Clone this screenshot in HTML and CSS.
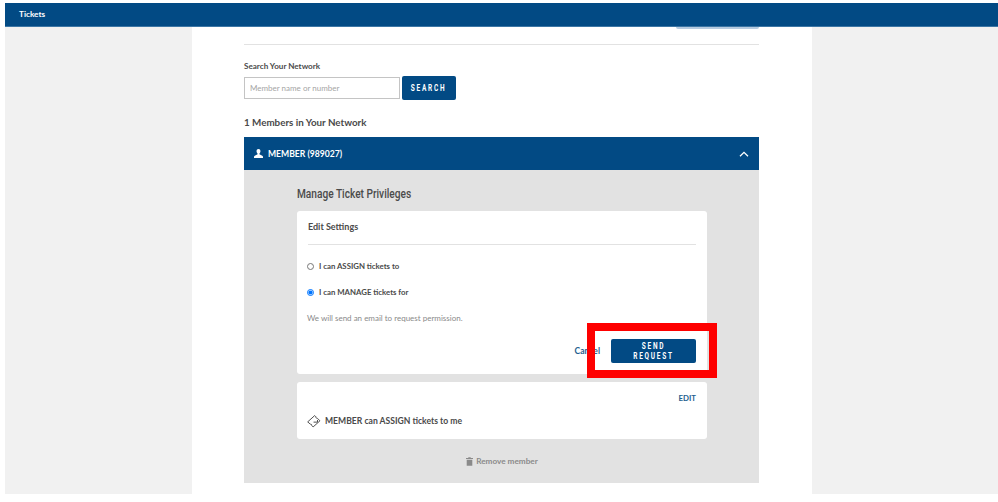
FILE: index.html
```html
<!DOCTYPE html>
<html lang="en">
<head>
  <meta charset="UTF-8">
  <meta name="viewport" content="width=device-width, initial-scale=1.0">
  <title>Tickets</title>
  <link rel="stylesheet" href="styles.css">
</head>
<body>
  <div class="page">
    <header class="topbar">Tickets</header>
    <div class="backdrop">
      <main class="content">
        <div class="top-btn"></div>
        <hr class="top-rule">
        <label class="search-label" for="search">Search Your Network</label>
        <div class="search-row">
          <input type="text" id="search" placeholder="Member name or number">
          <button type="button" class="btn search-btn"><span>SEARCH</span></button>
        </div>
        <h2 class="count">1 Members in Your Network</h2>
        <section class="member">
          <div class="member-head">
            <svg class="icon-user" viewBox="0 0 12 12" width="9" height="9"><path fill="#fff" d="M6 0C4.300 0 3.400 1.200 3.400 3c0 1.300.6 2.500 1.400 3.100v1L1 9c-.7.400-1 .9-1 1.500V12h12v-1.500c0-.6-.3-1.100-1-1.500L7.200 7.100v-1C8 5.500 8.600 4.300 8.600 3 8.600 1.200 7.700 0 6 0z"/></svg>
            <span class="member-name">MEMBER (989027)</span>
            <svg class="icon-chevron" viewBox="0 0 10 6" width="10" height="6"><path fill="none" stroke="#fff" stroke-width="1.300" d="M1 5.300l4-4 4 4"/></svg>
          </div>
          <div class="member-body">
            <h3 class="manage-title">Manage Ticket Privileges</h3>
            <div class="card settings">
              <div class="settings-title">Edit Settings</div>
              <label class="radio-row"><input type="radio" name="priv"> I can ASSIGN tickets to</label>
              <label class="radio-row"><input type="radio" name="priv" checked> I can MANAGE tickets for</label>
              <p class="note">We will send an email to request permission.</p>
              <div class="actions">
                <a href="#" class="cancel">Cancel</a>
                <button type="button" class="btn send-btn"><span>SEND REQUEST</span></button>
              </div>
            </div>
            <div class="card summary">
              <a href="#" class="edit">EDIT</a>
              <div class="summary-line">
                <svg viewBox="0 0 16 16" width="14" height="14"><g fill="none" stroke="#4a4a4a" stroke-width="1.100" stroke-linejoin="round"><path d="M.8 9L8.800 1.800l1.500 1.500c-.3 1 .7 2 1.700 1.700L14.800 7.800 7 14.800l-1.500-1.500c.3-1-.7-2-1.700-1.700z"/><path d="M7.500 9.300h4.500V6.800"/></g></svg>
                <span>MEMBER can ASSIGN tickets to me</span>
              </div>
            </div>
            <a href="#" class="remove">
              <svg viewBox="0 0 10 12" width="7" height="9"><path fill="#8a8a8a" d="M3.500 0h3l.5 1h3v1.500H0V1h3zM1 3.500h8V12H1z"/></svg>
              Remove member
            </a>
          </div>
        </section>
      </main>
    </div>
  </div>
  <div class="highlight"></div>
</body>
</html>
```

FILE: styles.css
```css
* {
  margin: 0;
  padding: 0;
  box-sizing: border-box;
}

body {
  font-family: 'Lato', 'Open Sans', sans-serif;
  background: #fff;
  color: #4a4a4a;
  height: 502px;
  overflow: hidden;
  position: relative;
}

.page {
  padding: 3px 0 8px 5px;
  height: 502px;
  display: flex;
  flex-direction: column;
}

.topbar {
  background: #024a84;
  border-bottom: 1px solid #3c76a5;
  color: #fff;
  height: 24px;
  padding: 5px 0 0 14px;
  font-size: 8.200px;
  font-weight: 700;
  line-height: 12px;
}

.backdrop {
  flex: 1;
  background: #f1f1f1;
  padding: 0 186px 0 187px;
  overflow: hidden;
}

.content {
  background: #fff;
  height: 100%;
  padding: 0 53px 0 52px;
  display: flex;
  flex-direction: column;
}

.top-btn {
  align-self: flex-end;
  width: 83px;
  height: 2px;
  background: #b6cbe0;
  border-radius: 0 0 2px 2px;
}

.top-rule {
  border: 0;
  border-top: 1px solid #e2e2e2;
  margin-top: 15px;
}

.search-label {
  font-size: 8.100px;
  font-weight: 700;
  margin-top: 15px;
  line-height: 12px;
}

.search-row {
  display: flex;
  gap: 2px;
  margin-top: 4px;
  align-items: center;
}

.search-row input {
  width: 156px;
  height: 22px;
  border: 1px solid #c4c4c4;
  padding: 0 5px;
  font-family: inherit;
  font-size: 8px;
}

.search-row input::placeholder {
  color: #a5a5a5;
}

.btn {
  background: #024a84;
  color: #fff;
  border: 0;
  border-radius: 2px;
  font-family: 'Roboto', sans-serif;
  font-weight: 700;
  font-size: 9px;
  letter-spacing: 2.400px;
}

/* the original label font is condensed, none is installed */
.btn span {
  display: inline-block;
  transform: scaleX(0.72);
}

.search-btn {
  width: 54px;
  height: 24px;
}

.count {
  font-size: 9.800px;
  font-weight: 700;
  line-height: 14px;
  margin-top: 15px;
}

.member {
  margin-top: 8px;
}

.member-head {
  background: #024a84;
  height: 33px;
  display: flex;
  align-items: center;
  padding: 0 10px 0 10px;
  color: #fff;
}

.member-name {
  flex: 1;
  font-size: 8.600px;
  font-weight: 700;
  margin-left: 5px;
}

.member-body {
  background: #e2e2e2;
  height: 313px;
  padding: 16px 52px 0 53px;
}

.manage-title {
  font-family: 'Roboto', sans-serif;
  font-size: 13px;
  font-weight: 500;
  line-height: 15px;
  white-space: nowrap;
  transform: scaleX(0.78);
  transform-origin: left;
}

.card {
  background: #fff;
  border-radius: 3px;
}

.settings {
  margin-top: 10px;
  height: 163px;
  padding: 0 11px;
}

.settings-title {
  font-size: 9px;
  font-weight: 700;
  height: 34px;
  line-height: 31px;
  border-bottom: 1px solid #e2e2e2;
}

.radio-row {
  display: flex;
  align-items: center;
  gap: 5px;
  font-size: 7.800px;
  font-weight: 700;
  height: 12px;
  margin: 15px 0 0 -1px;
}

.radio-row + .radio-row {
  margin-top: 14px;
}

.radio-row input {
  width: 7px;
  height: 7px;
  margin: 0;
}

.note {
  font-size: 8px;
  color: #8a8a8a;
  margin: 14px 0 0 -1px;
  line-height: 12px;
}

.actions {
  display: flex;
  justify-content: flex-end;
  align-items: center;
  gap: 11px;
  margin-top: 15px;
}

.cancel {
  color: #24608f;
  font-size: 8.500px;
  font-weight: 700;
  text-decoration: none;
}

.send-btn {
  width: 85px;
  height: 24px;
}

.summary {
  margin-top: 8px;
  height: 57px;
  padding: 11px 11px 0;
  display: flex;
  flex-direction: column;
}

.edit {
  align-self: flex-end;
  color: #24608f;
  font-size: 7.800px;
  font-weight: 700;
  text-decoration: none;
  line-height: 11px;
}

.summary-line {
  display: flex;
  align-items: center;
  gap: 4px;
  font-size: 8.600px;
  font-weight: 700;
  margin: 10px 0 0 -1px;
}

.remove {
  display: flex;
  justify-content: center;
  align-items: center;
  gap: 3px;
  color: #8a8a8a;
  font-size: 8.200px;
  font-weight: 700;
  text-decoration: none;
  margin-top: 17px;
}

/* annotation drawn on top of the screenshot */
.highlight {
  position: absolute;
  left: 587px;
  top: 323px;
  width: 130px;
  height: 55px;
  border: 8px solid #fe0000;
}
```
